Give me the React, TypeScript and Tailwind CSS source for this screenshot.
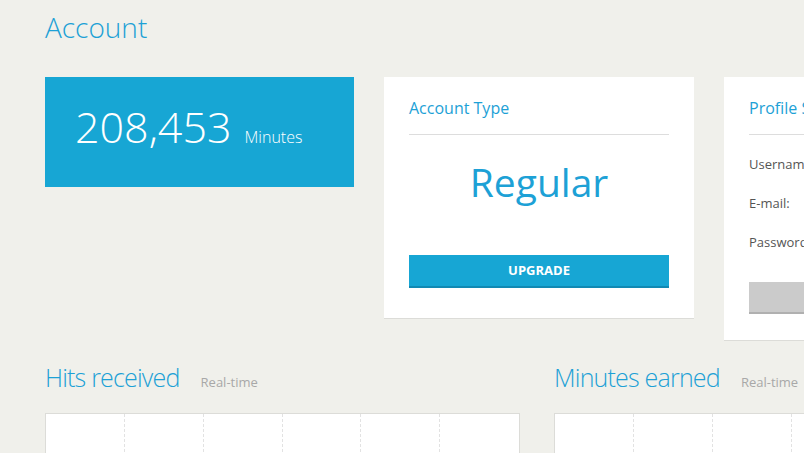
const font = { fontFamily: '"Open Sans", "Liberation Sans", sans-serif' };

function ChartBox() {
  return (
    <div className="grid h-[200px] w-[475px] shrink-0 grid-cols-6 border border-[#dcdcd8] bg-white">
      {[0, 1, 2, 3, 4, 5].map((i) => (
        <div
          key={i}
          className={i < 5 ? "border-r border-dashed border-[#e2e2e2]" : ""}
        />
      ))}
    </div>
  );
}

function ChartSection({ title }: { title: string }) {
  return (
    <section className="w-[475px] shrink-0">
      <div className="flex items-baseline gap-[21px]">
        <h2 className="text-[25px] font-light leading-[30px] tracking-[-0.8px] text-[#1da1d6]">
          {title}
        </h2>
        <span className="text-[13px] leading-5 text-[#a8a8a8]">Real-time</span>
      </div>
      <div className="mt-[21px]">
        <ChartBox />
      </div>
    </section>
  );
}

export default function App() {
  return (
    <div className="h-screen w-screen overflow-hidden bg-[#f0f0eb]" style={font}>
      <div className="w-[1100px] pl-[45px] pt-[9px]">
        <h1 className="text-[28px] font-light leading-[36px] text-[#1da1d6]">Account</h1>

        <div className="mt-[32px] flex items-start gap-[30px]">
          <div className="flex h-[110px] w-[309px] shrink-0 items-baseline gap-[13px] bg-[#17a6d4] pl-[30px] pt-[28px] text-white">
            <span className="text-[43px] font-light leading-[43px]">208,453</span>
            <span className="text-[16px] font-light">Minutes</span>
          </div>

          <div className="h-[242px] w-[310px] shrink-0 border-b border-[#dcdcd8] bg-white px-[25px] pt-[20px]">
            <h3 className="border-b border-[#dddddd] pb-[15px] text-[16px] leading-[22px] text-[#1da1d6]">
              Account Type
            </h3>
            <p className="mt-[23px] text-center text-[39px] leading-[48px] text-[#1da1d6]">Regular</p>
            <button className="mt-[49px] h-[33px] w-full border-b-2 border-[#1189b3] bg-[#17a6d4] text-[13px] font-bold text-white">
              UPGRADE
            </button>
          </div>

          <div className="h-[264px] w-[310px] shrink-0 border-b border-[#dcdcd8] bg-white px-[25px] pt-[20px]">
            <h3 className="border-b border-[#dddddd] pb-[15px] text-[16px] leading-[22px] text-[#1da1d6]">
              Profile Settings
            </h3>
            <div className="mt-[19px] flex flex-col gap-[19px] text-[13px] leading-5 text-[#555555]">
              <div className="flex">
                <span className="w-[90px]">Username:</span>
                <span>johndoe</span>
              </div>
              <div className="flex">
                <span className="w-[90px]">E-mail:</span>
                <span>john@example.com</span>
              </div>
              <div className="flex">
                <span className="w-[90px]">Password:</span>
                <span>••••••••</span>
              </div>
            </div>
            <button className="mt-[30px] h-[32px] w-full border-b-2 border-[#b0b0b0] bg-[#cbcbcb] text-[13px] font-bold text-white">
              EDIT
            </button>
          </div>
        </div>

        <div className="mt-[21px] flex gap-[34px]">
          <ChartSection title="Hits received" />
          <ChartSection title="Minutes earned" />
        </div>
      </div>
    </div>
  );
}
